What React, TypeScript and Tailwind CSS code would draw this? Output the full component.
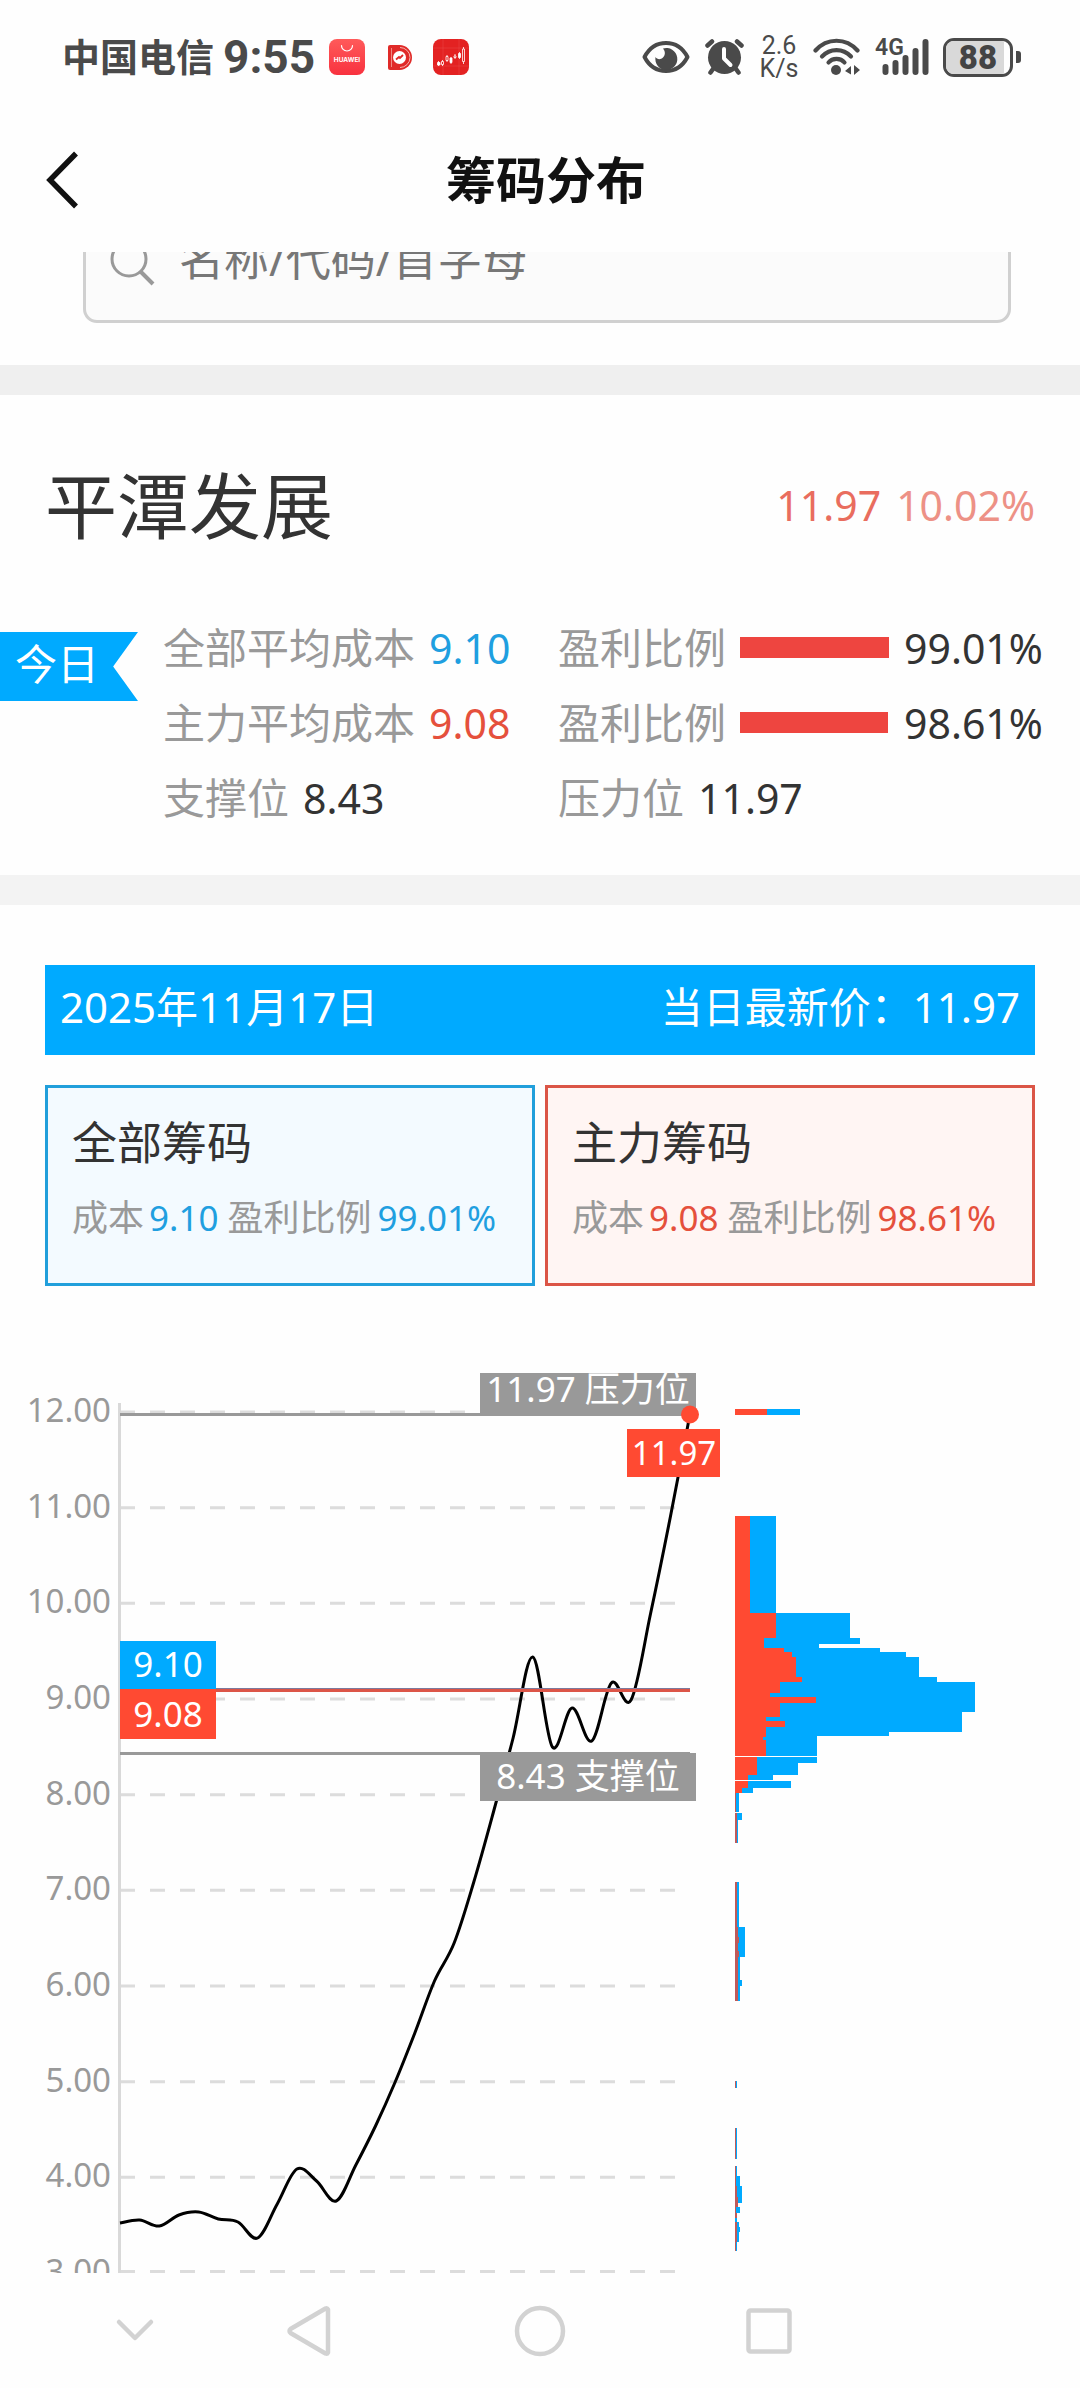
import React from "react";

const RED = "#ff4a32";
const BLUE = "#00aaff";

/* ---------- status bar ---------- */

function HuaweiIcon() {
  return (
    <svg className="h-[36px] w-[36px]" viewBox="0 0 36 36" aria-hidden="true">
      <defs>
        <linearGradient id="hw" x1="0" y1="0" x2="0" y2="1">
          <stop offset="0" stopColor="#ff5a5a" />
          <stop offset="1" stopColor="#f8323f" />
        </linearGradient>
      </defs>
      <rect width="36" height="36" rx="8" fill="url(#hw)" />
      <path d="M12.5 6.5a5.5 5.5 0 0 0 11 0" fill="none" stroke="#fff" strokeWidth="1.2" strokeLinecap="round" />
      <text x="18" y="23" fill="#fff" fontSize="6.5" fontWeight="700" textAnchor="middle" fontFamily="Inter, sans-serif">
        HUAWEI
      </text>
    </svg>
  );
}

function DIcon() {
  return (
    <svg className="h-[25px] w-[24px]" viewBox="0 0 24 25" aria-hidden="true">
      <path d="M2 0h9.500a12.500 12.500 0 0 1 0 25H2a2 2 0 0 1-2-2V2a2 2 0 0 1 2-2z" fill="#e02a28" />
      <path d="M3.500 3v19" stroke="#f08a84" strokeWidth="1" />
      <path d="M12 2.500a10 10 0 0 1 0 20" fill="none" stroke="#f6b3ae" strokeWidth="1" />
      <circle cx="11.500" cy="12.500" r="6.500" fill="#fff" />
      <path d="M8 14.500l3-2.500 1 1 3-3" fill="none" stroke="#e02a28" strokeWidth="1.800" />
    </svg>
  );
}

function StockIcon() {
  return (
    <svg className="h-[36px] w-[36px]" viewBox="0 0 36 36" aria-hidden="true">
      <rect width="36" height="36" rx="8" fill="#e32222" />
      <path d="M0 9h36M0 27h36M10 0v36M26 0v36" stroke="#ea4444" strokeWidth="0.600" />
      <g stroke="#fff" strokeWidth="0.800">
        <path d="M5.500 22v5M9.500 21v6M14 16v7M18 18v7M22 15v5M26.500 13v7M30.500 8v17" />
        <path d="M4.500 23.500h2.500v2.500h-2.500zM17 19h2v4.500h-2zM25.500 14.500h2v4h-2z" fill="#fff" />
        <path d="M8.500 22.500h2v3h-2zM13 17.500h2v4h-2zM21 17h2v1.500h-2zM29.500 10h2v12.500h-2z" fill="#e32222" />
      </g>
    </svg>
  );
}

function StatusBar() {
  return (
    <div className="flex h-[108px] items-center justify-between pt-[6px] pr-[59px] pl-[62px] text-[#4a4a4a]">
      <div className="flex items-center">
        <span className="pb-[2px] text-[38px] leading-[46px] font-bold">中国电信</span>
        <span className="ml-[9px] font-[Roboto] text-[46px] leading-[46px] font-bold">9:55</span>
        <div className="ml-[14px] flex items-center">
          <HuaweiIcon />
          <div className="mr-[21px] ml-[23px]">
            <DIcon />
          </div>
          <StockIcon />
        </div>
      </div>
      <div className="flex items-center">
        <svg className="h-[34px] w-[48px]" viewBox="0 0 48 34" aria-hidden="true">
          <path
            d="M2.500 17C7 8.500 14.500 3 24 3s17 5.500 21.500 14C41 25.500 33.500 31 24 31S7 25.500 2.500 17z"
            fill="none"
            stroke="currentColor"
            strokeWidth="4"
            strokeLinejoin="round"
          />
          <path d="M21 8.500a11 11 0 1 1-7.500 8.500c1.500 2.500 5 3 7.500.5 2.500-2.500 2.500-6 0-9z" fill="currentColor" />
        </svg>
        <svg className="ml-[15px] h-[38px] w-[39px]" viewBox="0 0 39 38" aria-hidden="true">
          <g stroke="currentColor" strokeWidth="4.500" strokeLinecap="round">
            <path d="M2.500 7.500L7 3.500M36.500 7.500L32 3.500M8 31l-2.500 3.500M31 31l2.500 3.500" />
          </g>
          <circle cx="19.500" cy="19.500" r="16.500" fill="currentColor" />
          <path d="M19 11v9.500l6.500 6.500" fill="none" stroke="#fff" strokeWidth="4" strokeLinecap="round" strokeLinejoin="round" />
        </svg>
        <div className="ml-[16px] flex w-[38px] flex-col items-center font-[Roboto] text-[25px] leading-[23px]">
          <span>2.6</span>
          <span>K/s</span>
        </div>
        <svg className="ml-[15px] h-[38px] w-[47px]" viewBox="0 0 47 38" aria-hidden="true">
          <g fill="none" stroke="currentColor" strokeWidth="4.200" strokeLinecap="round">
            <path d="M2.500 12.500C14-.5 33-.5 44.500 12.500" />
            <path d="M9 18.500c8-8.500 21-8.500 29 0" />
            <path d="M15.500 24.500c4-4.800 12-4.800 16 0" />
          </g>
          <circle cx="23" cy="32" r="5" fill="currentColor" />
          <path d="M38 28v8.500l-6-3.500zM41 27l6 5-6 5z" fill="currentColor" />
        </svg>
        <div className="relative ml-[15px] h-[38px] w-[54px]">
          <span className="absolute top-0 left-0 font-[Roboto] text-[23px] leading-[20px] font-semibold">4G</span>
          <svg className="h-[38px] w-[54px]" viewBox="0 0 54 38" aria-hidden="true">
            <g stroke="currentColor" strokeWidth="6" strokeLinecap="round">
              <path d="M10.500 29v5M20.500 25v9M30.500 20v14M40.500 13v21M50.500 4v30" />
            </g>
          </svg>
        </div>
        <div className="ml-[14px] flex h-[39px] w-[70px] items-stretch overflow-hidden rounded-[11px] border-[3px] border-current">
          <div className="flex w-[58px] items-center justify-center bg-[#d9d9d9] pl-[6px] font-[Roboto] text-[33px] leading-[33px] font-black text-[#444444]">
            88
          </div>
        </div>
        <div className="ml-[3px] h-[12px] w-[5px] rounded-r-[3px] bg-current" />
      </div>
    </div>
  );
}

/* ---------- summary ---------- */

function Metric({ label, value, tone }: { label: string; value: string; tone: string }) {
  return (
    <div className="flex h-[75px] items-center gap-[14px] whitespace-nowrap">
      <span className="text-[#999999]">{label}</span>
      <span className={`text-[41px] ${tone}`}>{value}</span>
    </div>
  );
}

function Ratio({ value }: { value: number }) {
  return (
    <div className="flex h-[75px] items-center gap-[14px] whitespace-nowrap">
      <span className="text-[#999999]">盈利比例</span>
      <div className="h-[21px] w-[150px]">
        <div className="h-full bg-[#ee4540]" style={{ width: `${value}%` }} />
      </div>
      <span className="text-[41px] text-[#333333]">{value.toFixed(2)}%</span>
    </div>
  );
}

function Card({
  title,
  cost,
  ratio,
  frame,
  tone,
}: {
  title: string;
  cost: string;
  ratio: string;
  frame: string;
  tone: string;
}) {
  return (
    <div className={`flex-1 border-[3px] px-[24px] pt-[25px] pb-[38px] ${frame}`}>
      <h2 className="text-[45px] leading-[60px] text-[#333333]">{title}</h2>
      <p className="mt-[18px] flex text-[36px] leading-[54px] whitespace-nowrap text-[#999999]">
        成本<span className={`mr-[9px] ml-[5px] text-[35px] ${tone}`}>{cost}</span>
        盈利比例<span className={`ml-[6px] text-[35px] ${tone}`}>{ratio}</span>
      </p>
    </div>
  );
}

/* ---------- chart ---------- */

const LEFT = 120;
const RIGHT = 690;
const yOf = (price: number) => 126 + (12 - price) * 95.67;
const ticks = [12, 11, 10, 9, 8, 7, 6, 5, 4, 3];

const curve = [
  937, 934, 940, 929, 926, 933, 936, 952, 918, 883, 895, 915, 879, 840, 796, 747, 695, 657, 596, 526, 452, 371, 461,
  422, 455, 397, 414, 327, 231, 128,
];

function smoothPath(ys: number[]) {
  const step = (RIGHT - LEFT) / (ys.length - 1);
  const pts = ys.map((y, i) => [LEFT + i * step, y]);
  let d = `M${pts[0][0]} ${pts[0][1]}`;
  for (let i = 0; i < pts.length - 1; i++) {
    const a = pts[Math.max(i - 1, 0)];
    const b = pts[i];
    const c = pts[i + 1];
    const e = pts[Math.min(i + 2, pts.length - 1)];
    const k = 0.17;
    d += `C${b[0] + (c[0] - a[0]) * k} ${b[1] + (c[1] - a[1]) * k} ${c[0] - (e[0] - b[0]) * k} ${c[1] - (e[1] - b[1]) * k} ${c[0]} ${c[1]}`;
  }
  return d;
}

/* [top, bottom, width] */
const allChips: number[][] = [
  [123, 129, 65], [230, 327, 41], [327, 352, 115], [352, 358, 125], [358, 362, 84], [362, 366, 145],
  [366, 371, 171], [371, 391, 184], [391, 396, 202], [396, 426, 240], [426, 446, 227], [446, 450, 154],
  [450, 470, 82], [471, 477, 82], [477, 489, 63], [489, 494, 38], [495, 502, 56], [502, 507, 18],
  [507, 526, 4], [527, 534, 7], [534, 557, 3], [596, 641, 4], [641, 671, 10], [671, 694, 5],
  [694, 700, 7], [700, 715, 5], [795, 802, 2], [842, 873, 2], [880, 890, 2], [890, 900, 5],
  [900, 917, 7], [917, 921, 3], [921, 927, 5], [927, 936, 2], [936, 941, 4], [941, 946, 5],
  [946, 956, 4], [956, 965, 2],
];
const mainChips: number[][] = [
  [123, 129, 32], [230, 327, 15], [327, 352, 41], [352, 362, 29], [362, 366, 49], [366, 371, 57],
  [371, 391, 61], [391, 396, 67], [396, 407, 45], [407, 411, 35], [411, 417, 81], [417, 431, 45],
  [431, 435, 31], [435, 441, 50], [441, 451, 31], [451, 454, 28], [454, 470, 31], [471, 489, 22],
  [489, 494, 13], [495, 502, 13], [502, 507, 7],
];
const thinChips: number[][] = [
  [507, 526, 1], [527, 534, 2], [534, 557, 2],
  [596, 641, 2], [641, 651, 3], [651, 657, 4], [657, 665, 3], [665, 671, 4], [671, 694, 3],
  [694, 700, 3], [700, 715, 3], [795, 802, 1], [842, 873, 1], [880, 900, 1],
  [900, 911, 2], [911, 921, 3], [921, 927, 1], [927, 932, 2], [936, 956, 2], [956, 965, 1],
];

function Bars({ rows, fill }: { rows: number[][]; fill: string }) {
  return (
    <g fill={fill} shapeRendering="crispEdges">
      {rows.map(([t, b, w]) => (
        <rect key={t} x="735" y={t} width={w} height={b - t} />
      ))}
    </g>
  );
}

function Chart() {
  return (
    <svg className="block w-full" viewBox="0 0 1080 987" role="img" aria-label="筹码分布图">
      <g stroke="#dcdcdc" strokeWidth="3" strokeDasharray="15 15">
        {ticks.map((t) => (
          <path key={t} d={`M${LEFT} ${Math.min(yOf(t), 985.5)}H675`} />
        ))}
      </g>
      <path d="M119.500 117V987" stroke="#d9d9d9" strokeWidth="3" />
      <g fill="#999999" fontSize="33" textAnchor="end">
        {ticks.map((t) => (
          <text key={t} x="111" y={yOf(t) + 10}>
            {t.toFixed(2)}
          </text>
        ))}
      </g>
      <path d={smoothPath(curve)} fill="none" stroke="#000" strokeWidth="3" strokeLinejoin="round" />
      <g strokeWidth="3">
        <path d={`M${LEFT} 128.500H${RIGHT}M${LEFT} 467.500H${RIGHT}`} stroke="#999999" />
        <path d={`M${LEFT} 403.500H${RIGHT}`} stroke="#7d7a9c" />
        <path d={`M${LEFT} 404.500H${RIGHT}`} stroke="#dc5548" />
      </g>
      <g fill="#999999">
        <rect x="480" y="87" width="216" height="43" />
        <rect x="480" y="467" width="216" height="48" />
      </g>
      <rect x="120" y="355" width="96" height="48" fill={BLUE} />
      <g fill={RED}>
        <rect x="120" y="403" width="96" height="50" />
        <rect x="627" y="143" width="93" height="48" />
        <circle cx="690" cy="128.500" r="9" />
      </g>
      <g fill="#fff" fontSize="35" textAnchor="middle">
        <text x="588" y="116">11.97 压力位</text>
        <text x="588" y="503">8.43 支撑位</text>
        <text x="168" y="391">9.10</text>
        <text x="168" y="441">9.08</text>
        <text x="674" y="179" fontSize="33">11.97</text>
      </g>
      <Bars rows={allChips} fill={BLUE} />
      <Bars rows={mainChips} fill={RED} />
      <Bars rows={thinChips} fill="#c05a5a" />
    </svg>
  );
}

/* ---------- system navigation ---------- */

function NavButton({ label, children }: { label: string; children: React.ReactNode }) {
  return (
    <button type="button" aria-label={label} className="flex items-center justify-center">
      <svg
        className="h-[54px] w-[54px] shrink-0"
        viewBox="0 0 54 54"
        fill="none"
        stroke="#d2d2d2"
        strokeWidth="4.500"
        strokeLinecap="round"
        strokeLinejoin="round"
      >
        {children}
      </svg>
    </button>
  );
}

export default function App() {
  return (
    <div
      lang="zh-CN"
      className="flex min-h-screen flex-col bg-[#fefefe] font-['Noto_Sans','Noto_Sans_CJK_SC',sans-serif] text-[42px] leading-[60px]"
    >
      <StatusBar />
      <header className="grid h-36 grid-cols-[1fr_auto_1fr] items-center pr-[33px] pl-[45px]">
        <button type="button" aria-label="返回" className="justify-self-start">
          <svg className="h-[58px] w-[34px]" viewBox="0 0 34 58" fill="none" stroke="#111" strokeWidth="5.500" aria-hidden="true">
            <path d="M31 2.500L5 29l26 26.500" />
          </svg>
        </button>
        <h1 className="text-[50px] leading-[60px] font-bold text-[#111111]">筹码分布</h1>
      </header>

      <main className="flex flex-col">
        <div className="flex h-[71px] items-end overflow-hidden pr-[69px] pl-[83px]">
          <label className="flex h-[128px] w-full shrink-0 items-center rounded-[14px] border-[3px] border-[#d0d0d0] bg-[#fbfbfb] pl-[24px]">
            <svg className="h-[56px] w-[46px] shrink-0" viewBox="0 -10 46 56" fill="none" stroke="#999" strokeWidth="3" aria-hidden="true">
              <circle cx="19" cy="18" r="17" />
              <path d="M31 31l12 12" strokeWidth="4" />
            </svg>
            <input
              type="text"
              aria-label="搜索"
              placeholder="名称/代码/首字母"
              className="ml-[23px] w-full bg-transparent text-[45px] leading-[60px] outline-none placeholder:text-[#777777]"
            />
          </label>
        </div>

        <div className="mt-[42px] h-[30px] bg-[#efefef]" />

        <section className="pb-10">
          <div className="flex items-center justify-between px-[45px] pt-[65px]">
            <h2 className="text-[72px] leading-[90px] text-[#333333]">平潭发展</h2>
            <div className="flex gap-[15px] text-[41px]">
              <span className="text-[#e96d5e]">11.97</span>
              <span className="text-[#ed9186]">10.02%</span>
            </div>
          </div>
          <div className="mt-[60px] flex items-start">
            <div className="mt-[22px] h-[69px] w-[138px] bg-[#00aaff] pl-[15px] leading-[64px] text-white [clip-path:polygon(0_0,100%_0,82%_50%,100%_100%,0_100%)]">
              今日
            </div>
            <div className="ml-[25px] grid flex-1 grid-cols-[395fr_522fr]">
              <Metric label="全部平均成本" value="9.10" tone="text-[#1f9fe0]" />
              <Ratio value={99.01} />
              <Metric label="主力平均成本" value="9.08" tone="text-[#e5503c]" />
              <Ratio value={98.61} />
              <Metric label="支撑位" value="8.43" tone="text-[#333333]" />
              <Metric label="压力位" value="11.97" tone="text-[#333333]" />
            </div>
          </div>
        </section>

        <div className="h-[30px] bg-[#f3f3f3]" />

        <section className="px-[45px] pt-[60px]">
          <div className="flex h-[90px] items-start justify-between bg-[#00aaff] px-[15px] pt-[12px] text-white">
            <span>2025年11月17日</span>
            <span>当日最新价：11.97</span>
          </div>
          <div className="mt-[30px] flex gap-[10px]">
            <Card
              title="全部筹码"
              cost="9.10"
              ratio="99.01%"
              frame="border-[#219fdb] bg-[#f3faff]"
              tone="text-[#1f9fe0]"
            />
            <Card
              title="主力筹码"
              cost="9.08"
              ratio="98.61%"
              frame="border-[#db5546] bg-[#fff5f3]"
              tone="text-[#e5503c]"
            />
          </div>
        </section>

        <Chart />
      </main>

      <nav className="grid h-[115px] grid-cols-[270fr_78fr_384fr_74fr_274fr]">
        <NavButton label="收起">
          <path d="M11 18l16 16 16-16" />
        </NavButton>
        <NavButton label="后退">
          <path d="M46 5.500v43a2 2 0 0 1-2.500 1L8.500 29a2.500 2.500 0 0 1 0-4L43.500 4.500a2 2 0 0 1 2.500 1z" />
        </NavButton>
        <NavButton label="主页">
          <circle cx="27" cy="27" r="23" />
        </NavButton>
        <NavButton label="最近任务">
          <rect x="6.500" y="6.500" width="41" height="41" rx="2" />
        </NavButton>
      </nav>
    </div>
  );
}
